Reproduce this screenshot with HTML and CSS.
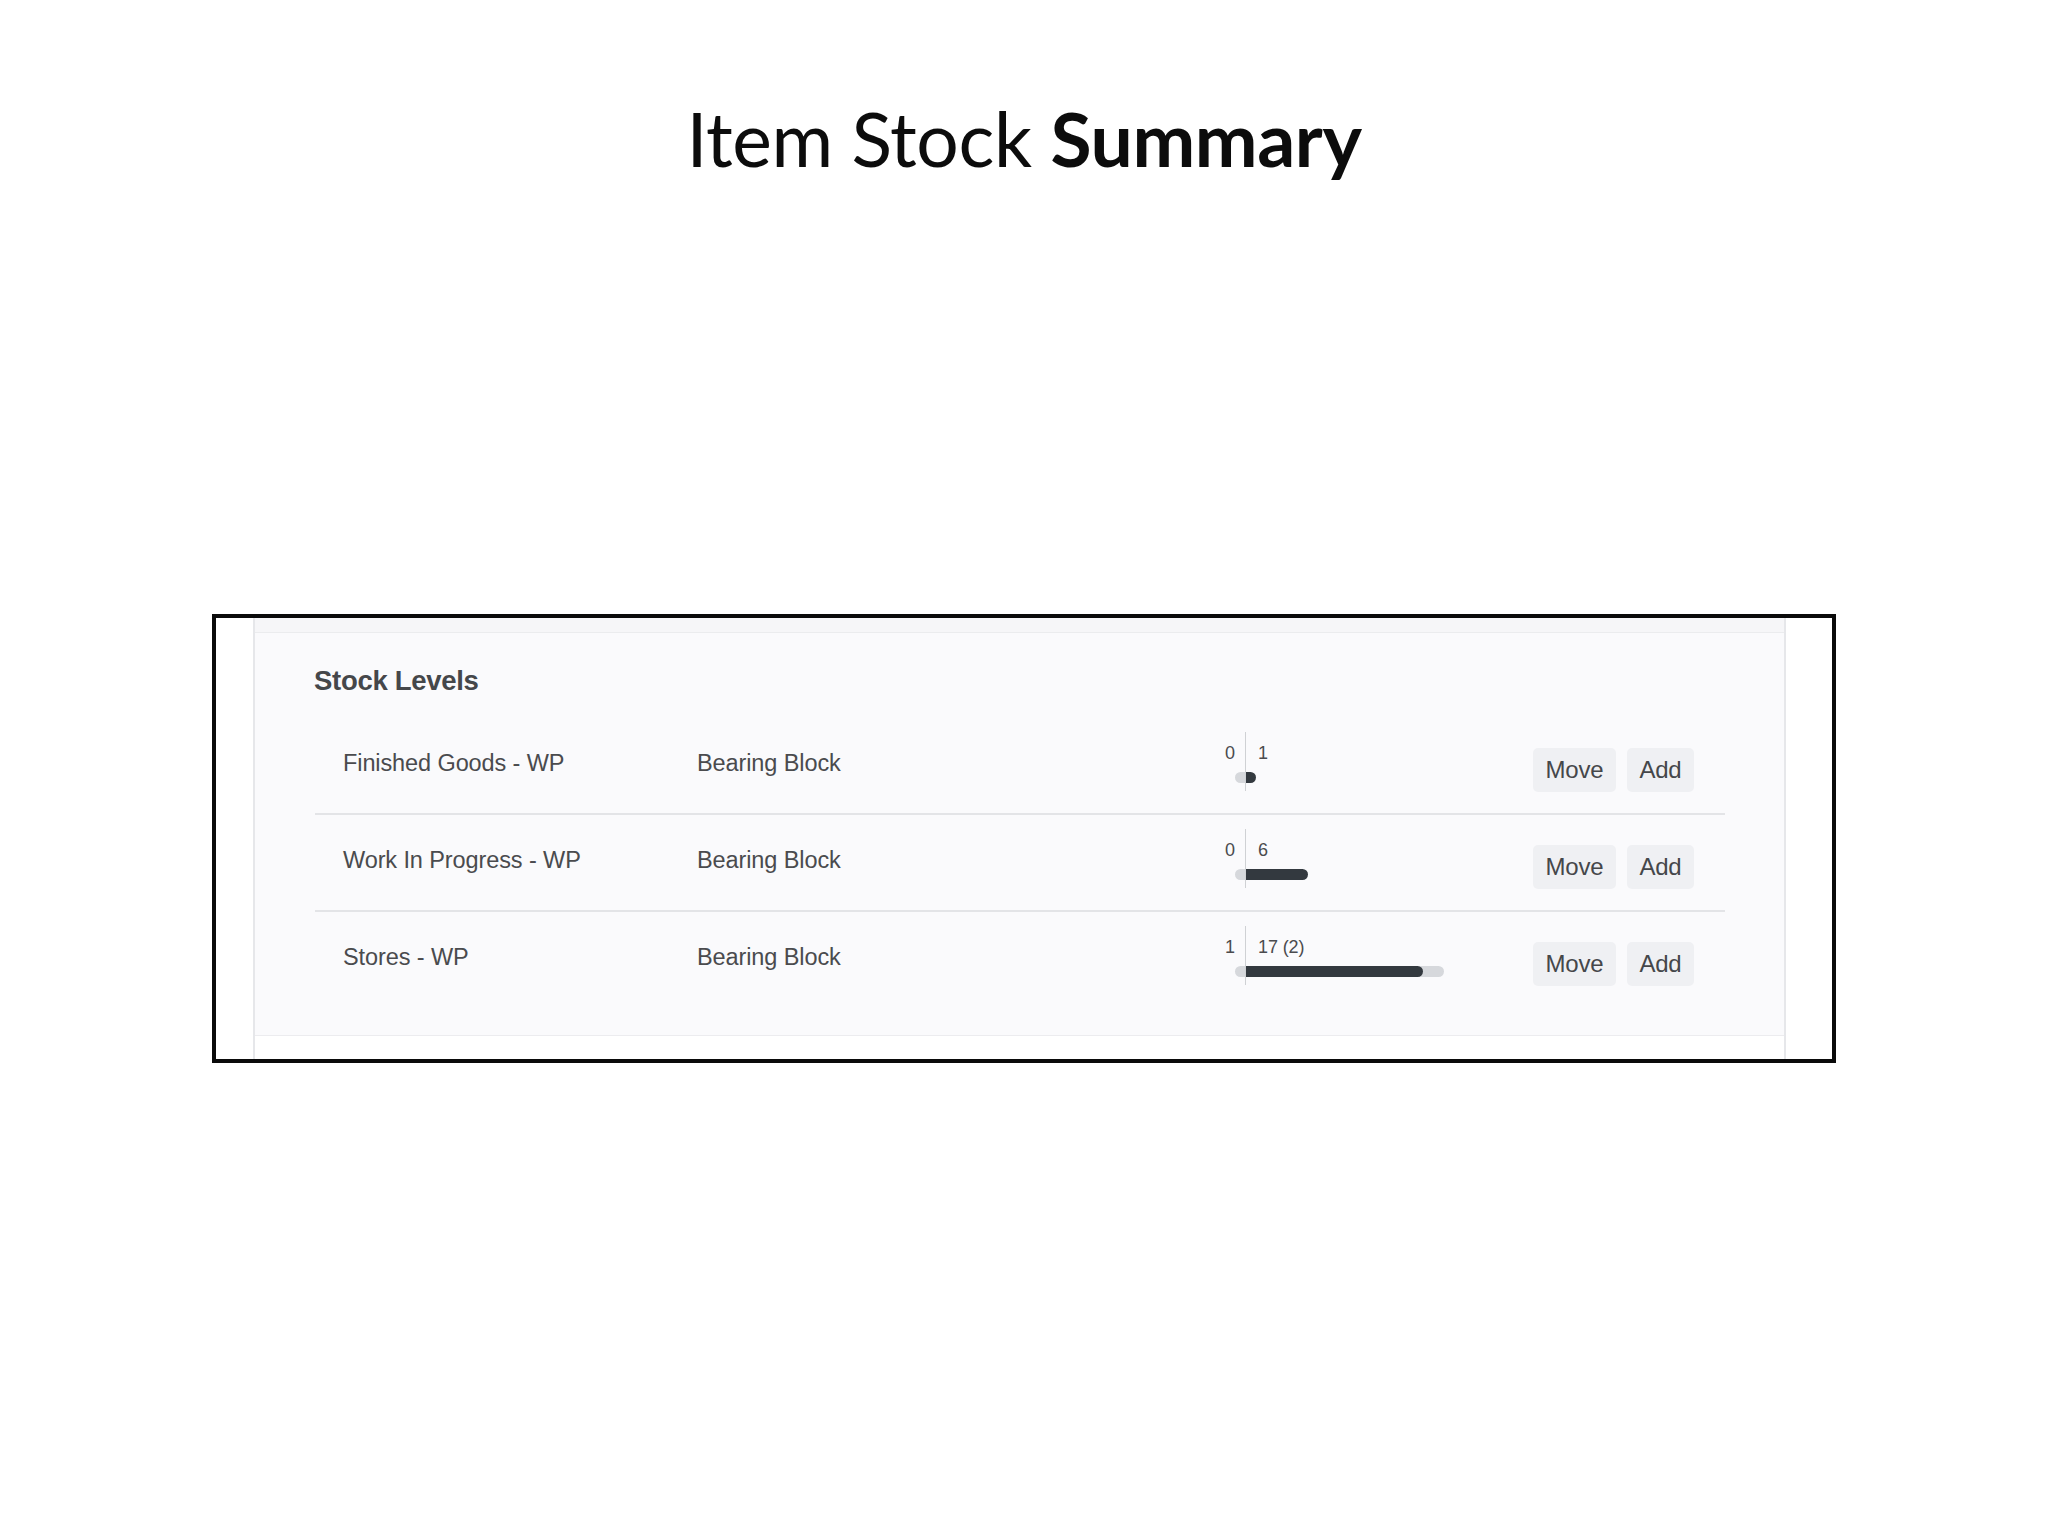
FILE: index.html
```html
<!DOCTYPE html>
<html lang="en">
<head>
<meta charset="utf-8">
<title>Item Stock Summary</title>
<link rel="stylesheet" href="styles.css">
</head>
<body>
  <h1 class="title">Item Stock <strong>Summary</strong></h1>
  <div class="frame">
    <div class="inner">
      <div class="top-strip"></div>
      <div class="panel">
        <h2 class="panel-title">Stock Levels</h2>
        <div class="rows">
          <div class="row">
            <div class="cell name">Finished Goods - WP</div>
            <div class="cell item">Bearing Block</div>
            <div class="cell chart">
              <div class="labels"><span class="min">0</span><span class="max">1</span></div>
              <div class="track" style="width:20px"></div>
              <div class="fill" style="width:11px"></div>
              <div class="axis"></div>
            </div>
            <div class="cell actions"><button class="btn">Move</button><button class="btn">Add</button></div>
          </div>
          <div class="row">
            <div class="cell name">Work In Progress - WP</div>
            <div class="cell item">Bearing Block</div>
            <div class="cell chart">
              <div class="labels"><span class="min">0</span><span class="max">6</span></div>
              <div class="track" style="width:20px"></div>
              <div class="fill" style="width:63px"></div>
              <div class="axis"></div>
            </div>
            <div class="cell actions"><button class="btn">Move</button><button class="btn">Add</button></div>
          </div>
          <div class="row">
            <div class="cell name">Stores - WP</div>
            <div class="cell item">Bearing Block</div>
            <div class="cell chart">
              <div class="labels"><span class="min">1</span><span class="max">17 (2)</span></div>
              <div class="track" style="width:209px"></div>
              <div class="fill" style="width:178px"></div>
              <div class="axis"></div>
            </div>
            <div class="cell actions"><button class="btn">Move</button><button class="btn">Add</button></div>
          </div>
        </div>
      </div>
    </div>
  </div>
</body>
</html>
```

FILE: styles.css
```css
html, body {
  margin: 0;
  padding: 0;
  background: #ffffff;
}

body {
  width: 2048px;
  min-height: 1536px;
  font-family: "Liberation Sans", Arial, sans-serif;
}

.title {
  margin: 93px 0 0;
  font-family: Lato, "Open Sans", sans-serif;
  font-weight: 400;
  font-size: 75px;
  line-height: 91px;
  text-align: center;
  color: #0c0c0c;
  letter-spacing: -0.4px;
}

.title strong {
  font-weight: 700;
}

.frame {
  box-sizing: border-box;
  width: 1624px;
  height: 449px;
  margin: 430px auto 0;
  border: 4px solid #0a0a0a;
  background: #ffffff;
  padding: 0 46px 0 37px;
}

.inner {
  height: 100%;
  border-left: 2px solid #e6e7ea;
  border-right: 2px solid #e6e7ea;
  display: flex;
  flex-direction: column;
}

.top-strip {
  height: 14px;
  background: #f6f6f8;
  border-bottom: 1px solid #ebecee;
}

.panel {
  height: 403px;
  box-sizing: border-box;
  background: #fafafc;
  border-bottom: 1px solid #ececef;
  padding: 32px 0 0 59px;
}

.panel-title {
  margin: 0;
  font-size: 27.5px;
  line-height: 32px;
  font-weight: 700;
  color: #45474a;
  letter-spacing: -0.3px;
}

.rows {
  margin-top: 21px;
  width: 1410px;
  margin-left: 1px;
}

.row {
  display: flex;
  align-items: center;
  height: 95px;
  border-bottom: 2px solid #e3e4e7;
  padding-left: 28px;
}

.row:last-child {
  border-bottom: none;
}

.cell {
  color: #4a4b4e;
  font-size: 23.5px;
  letter-spacing: -0.1px;
}

.name {
  width: 354px;
  padding-bottom: 4px;
}

.item {
  width: 518px;
  padding-bottom: 4px;
}

.chart {
  position: relative;
  width: 318px;
  box-sizing: border-box;
  height: 59px;
  padding-top: 11px;
  margin-top: -8px;
}

.labels {
  display: flex;
  font-size: 18px;
  line-height: 20px;
  color: #4a4b4e;
}

.min {
  width: 30px;
  box-sizing: border-box;
  padding-right: 10px;
  text-align: right;
}

.max {
  padding-left: 13px;
}

.track {
  margin: 9px 0 0 20px;
  height: 11px;
  border-radius: 6px;
  background: #d6d8dc;
}

.fill {
  position: absolute;
  left: 30px;
  top: 40px;
  height: 11px;
  border-radius: 0 6px 6px 0;
  background: #33393f;
}

.axis {
  position: absolute;
  left: 30px;
  top: 0;
  width: 1px;
  height: 59px;
  background: #cfd1d4;
}

.actions {
  display: flex;
  gap: 11px;
  margin-top: 8px;
}

.btn {
  font-family: "Liberation Sans", Arial, sans-serif;
  font-size: 24px;
  color: #45474a;
  background: #eff0f3;
  border: none;
  border-radius: 5px;
  height: 44px;
  padding: 0 12.5px;
  letter-spacing: -0.2px;
}
```
